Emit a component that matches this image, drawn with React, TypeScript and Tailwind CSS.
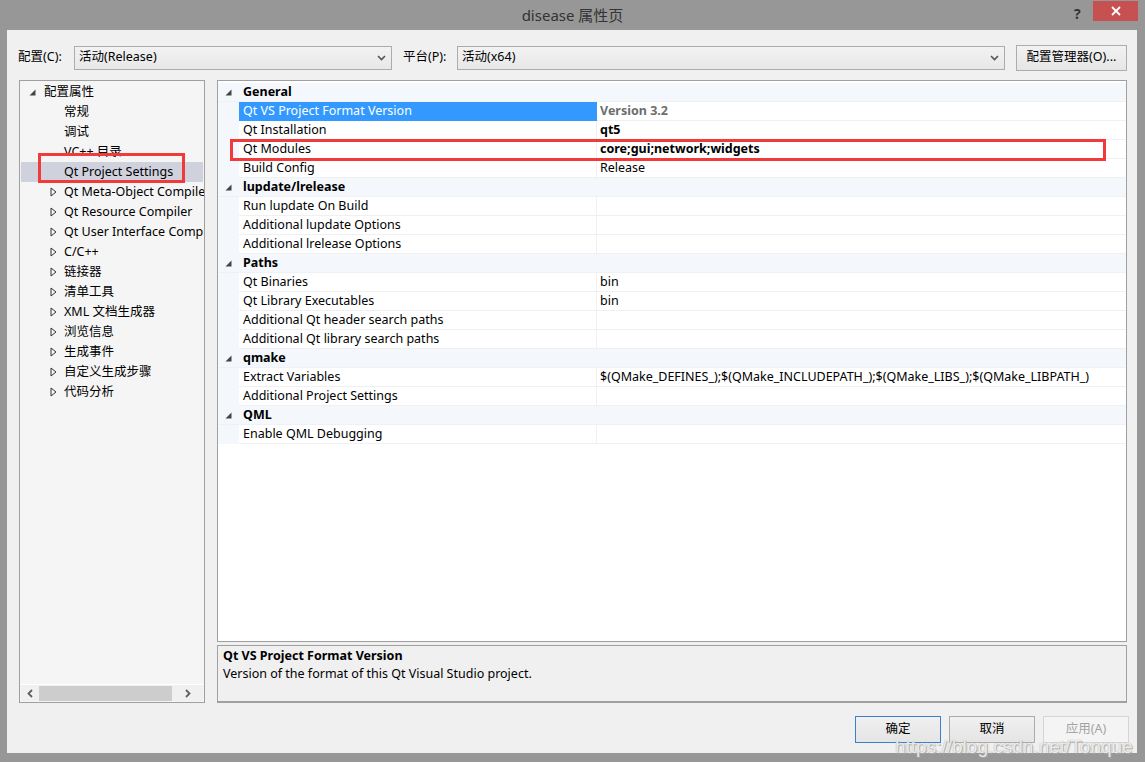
import React from 'react';

const FONT = { fontFamily: '"Noto Sans", "Noto Sans CJK SC", sans-serif' };

type Prop = { name: string; value?: string; bold?: boolean; selected?: boolean };
type Group = { title: string; props: Prop[] };

const groups: Group[] = [
  {
    title: 'General',
    props: [
      { name: 'Qt VS Project Format Version', value: 'Version 3.2', selected: true },
      { name: 'Qt Installation', value: 'qt5', bold: true },
      { name: 'Qt Modules', value: 'core;gui;network;widgets', bold: true },
      { name: 'Build Config', value: 'Release' },
    ],
  },
  {
    title: 'lupdate/lrelease',
    props: [
      { name: 'Run lupdate On Build' },
      { name: 'Additional lupdate Options' },
      { name: 'Additional lrelease Options' },
    ],
  },
  {
    title: 'Paths',
    props: [
      { name: 'Qt Binaries', value: 'bin' },
      { name: 'Qt Library Executables', value: 'bin' },
      { name: 'Additional Qt header search paths' },
      { name: 'Additional Qt library search paths' },
    ],
  },
  {
    title: 'qmake',
    props: [
      { name: 'Extract Variables', value: '$(QMake_DEFINES_);$(QMake_INCLUDEPATH_);$(QMake_LIBS_);$(QMake_LIBPATH_)' },
      { name: 'Additional Project Settings' },
    ],
  },
  { title: 'QML', props: [{ name: 'Enable QML Debugging' }] },
];

const treeItems = [
  { label: '常规', arrow: false },
  { label: '调试', arrow: false },
  { label: 'VC++ 目录', arrow: false },
  { label: 'Qt Project Settings', arrow: false, selected: true },
  { label: 'Qt Meta-Object Compiler', arrow: true },
  { label: 'Qt Resource Compiler', arrow: true },
  { label: 'Qt User Interface Compiler', arrow: true },
  { label: 'C/C++', arrow: true },
  { label: '链接器', arrow: true },
  { label: '清单工具', arrow: true },
  { label: 'XML 文档生成器', arrow: true },
  { label: '浏览信息', arrow: true },
  { label: '生成事件', arrow: true },
  { label: '自定义生成步骤', arrow: true },
  { label: '代码分析', arrow: true },
];

function Expanded() {
  return (
    <svg width="7" height="7" viewBox="0 0 7 7">
      <path d="M6.5 0.5 L6.5 6.5 L0.5 6.5 Z" fill="#444" />
    </svg>
  );
}

function Collapsed() {
  return (
    <svg width="7" height="10" viewBox="0 0 7 10">
      <path d="M1 1 L6 5 L1 9 Z" fill="none" stroke="#333" strokeWidth="1" />
    </svg>
  );
}

function Chevron() {
  return (
    <svg width="9" height="6" viewBox="0 0 9 6">
      <path d="M1 1 L4.5 4.5 L8 1" fill="none" stroke="#555" strokeWidth="1.6" />
    </svg>
  );
}

function Combo({ text, width }: { text: string; width: string }) {
  return (
    <div className={`${width} h-[24px] border border-[#acacac] bg-gradient-to-b from-[#f2f2f2] to-[#e8e8e8] flex items-center justify-between pl-[4px] pr-[5px]`}>
      <span>{text}</span>
      <Chevron />
    </div>
  );
}

function Button({ label, primary, disabled }: { label: string; primary?: boolean; disabled?: boolean }) {
  return (
    <div
      className={`w-[86px] h-[27px] flex items-center justify-center border bg-gradient-to-b from-[#f0f0f0] to-[#e5e5e5] ${
        primary ? 'border-[#3c7fd1]' : disabled ? 'border-[#d5d5d5] text-[#a3a3a3] from-[#f4f4f4] to-[#f4f4f4]' : 'border-[#acacac]'
      }`}
    >
      {label}
    </div>
  );
}

function Tree() {
  return (
    <div className="w-[186px] h-[623px] border border-[#a0a0a0] bg-[#f5f5f5] flex flex-col overflow-hidden">
      <div className="flex-1 pt-[1px]">
        <div className="h-[20px] flex items-center">
          <div className="w-[24px] shrink-0 flex justify-end pr-[8px]">
            <Expanded />
          </div>
          <span>配置属性</span>
        </div>
        {treeItems.map((it) => (
          <div
            key={it.label}
            className={`h-[20px] flex items-center whitespace-nowrap ${it.selected ? 'bg-[#cfd1dd] mx-[1px]' : ''}`}
          >
            <div className={`${it.selected ? 'w-[43px]' : 'w-[44px]'} shrink-0 flex justify-end pr-[7px]`}>
              {it.arrow && <Collapsed />}
            </div>
            <span>{it.label}</span>
          </div>
        ))}
      </div>
      <div className="h-[17px] border-t border-white bg-[#f0f0f0] flex items-center mx-[1px] mb-[1px]">
        <div className="w-[18px] flex justify-center">
          <svg width="6" height="9" viewBox="0 0 6 9">
            <path d="M5 1 L1.5 4.5 L5 8" fill="none" stroke="#606060" strokeWidth="1.8" />
          </svg>
        </div>
        <div className="w-[133px] h-[15px] bg-[#cdcdcd]" />
        <div className="flex-1 flex justify-center">
          <svg width="6" height="9" viewBox="0 0 6 9">
            <path d="M1 1 L4.5 4.5 L1 8" fill="none" stroke="#606060" strokeWidth="1.8" />
          </svg>
        </div>
      </div>
    </div>
  );
}

function Grid() {
  return (
    <div className="h-[562px] border border-[#a0a0a0] bg-white overflow-hidden pt-[2px]">
      {groups.map((g) => (
        <div key={g.title}>
          <div className="h-[19px] bg-[#f4f7fb] flex items-center border-b border-[#eef1f5]">
            <div className="w-[21px] flex justify-center">
              <Expanded />
            </div>
            <span className="pl-[4px] font-bold">{g.title}</span>
          </div>
          {g.props.map((p) => (
            <div key={p.name} className="h-[19px] flex">
              <div className="w-[21px] bg-[#f4f7fb]" />
              <div
                className={`w-[358px] pl-[4px] flex items-center border-r border-b whitespace-nowrap ${
                  p.selected ? 'bg-[#3399ff] text-white border-[#3399ff]' : 'border-[#f0f0f0]'
                }`}
              >
                {p.name}
              </div>
              <div
                className={`flex-1 pl-[3px] flex items-center border-b border-[#f0f0f0] whitespace-nowrap ${
                  p.selected ? 'font-bold text-[#6d6d6d]' : p.bold ? 'font-bold' : ''
                }`}
              >
                {p.value}
              </div>
            </div>
          ))}
        </div>
      ))}
    </div>
  );
}

export default function App() {
  return (
    <div className="relative w-[1145px] h-[762px] bg-[#979797] text-[12.5px] text-black flex flex-col overflow-hidden" style={FONT}>
      {/* title bar */}
      <div className="h-[30px] relative flex items-center justify-center">
        <span className="text-[15px] text-[#333] pt-[1px]">disease 属性页</span>
        <span className="absolute left-[1074px] top-[3px] text-[14px] font-bold text-[#333]">?</span>
        <div className="absolute left-[1093px] top-[1px] w-[45px] h-[20px] bg-[#c75050] flex items-center justify-center">
          <svg width="10" height="10" viewBox="0 0 10 10">
            <path d="M1 1 L9 9 M9 1 L1 9" stroke="white" strokeWidth="1.8" />
          </svg>
        </div>
      </div>

      {/* client */}
      <div className="relative ml-[7px] mr-[8px] h-[723px] bg-[#f0f0f0] flex flex-col">
        <div className="mt-[15px] h-[24px] flex items-center pl-[11px] pt-[1px]">
          <span className="w-[56px]">配置(C):</span>
          <Combo text="活动(Release)" width="w-[318px]" />
          <span className="ml-[11px] w-[54px]">平台(P):</span>
          <Combo text="活动(x64)" width="w-[548px]" />
          <div className="ml-[11px] w-[111px] h-[26px] border border-[#acacac] bg-gradient-to-b from-[#f2f2f2] to-[#e6e6e6] flex items-center justify-center">
            配置管理器(O)...
          </div>
        </div>

        <div className="mt-[11px] flex pl-[12px] gap-[12px]">
          <Tree />
          <div className="w-[910px] flex flex-col gap-[3px]">
            <Grid />
            <div className="h-[58px] border border-[#a0a0a0] border-b-[2px] bg-[#f0f0f0] px-[5px] pt-[1px] leading-[18px]">
              <div className="font-bold">Qt VS Project Format Version</div>
              <div>Version of the format of this Qt Visual Studio project.</div>
            </div>
          </div>
        </div>

        <div className="mt-[13px] flex justify-end gap-[8px] pr-[8px]">
          <Button label="确定" primary />
          <Button label="取消" />
          <Button label="应用(A)" disabled />
        </div>

        {/* highlight boxes */}
        <div className="absolute left-[31px] top-[123px] w-[147px] h-[30px] border-[3px] border-[#f23a3a]" />
        <div className="absolute left-[223px] top-[109px] w-[876px] h-[22px] border-[3px] border-[#f23a3a]" />

        {/* watermark */}
        <div
          className="absolute left-[888px] top-[703px] text-[19px] text-white/80 whitespace-nowrap"
          style={{ fontFamily: '"Liberation Sans", Arial, sans-serif', textShadow: '0 0 1px #999, 1px 1px 1px #aaa' }}
        >
          https://blog.csdn.net/Tonque
        </div>
      </div>
    </div>
  );
}
